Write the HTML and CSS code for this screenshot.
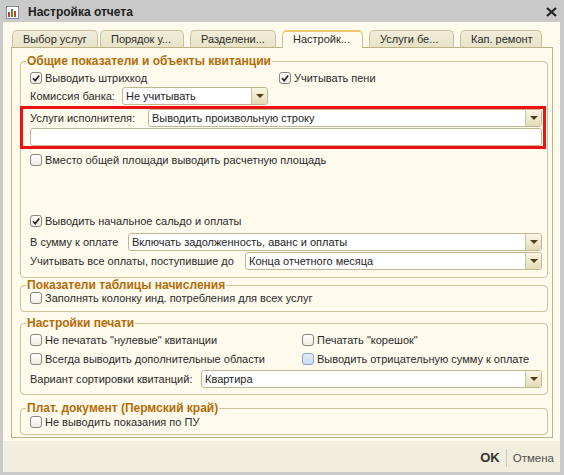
FILE: index.html
```html
<!DOCTYPE html>
<html lang="ru">
<head>
    <meta charset="UTF-8">
    <title>Настройка отчета</title>
    <link rel="stylesheet" href="styles.css">
</head>
<body>
<div class="window">
    <div class="titlebar">
        <svg class="app-icon" width="13" height="13" viewBox="0 0 13 13">
            <rect x="0.5" y="0.5" width="12" height="12" fill="#fff" stroke="#7d8aa0"/>
            <rect x="2" y="6" width="2" height="5" fill="#d8342a"/>
            <rect x="5" y="3" width="2" height="8" fill="#3c9a3c"/>
            <rect x="8" y="5" width="2" height="6" fill="#d8342a"/>
        </svg>
        <span class="title">Настройка отчета</span>
        <svg class="close" width="11" height="10" viewBox="0 0 11 10">
            <path d="M1 1 L10 9 M10 1 L1 9" stroke="#222" stroke-width="2.2"/>
        </svg>
    </div>
    <div class="client">
        <div class="main">
            <div class="tabs">
                <div class="tab">Выбор услуг</div>
                <div class="tab">Порядок у...</div>
                <div class="tab">Разделени...</div>
                <div class="tab active">Настройк...</div>
                <div class="tab">Услуги бе...</div>
                <div class="tab">Кап. ремонт</div>
            </div>
            <div class="panel">
                <fieldset class="group group-main">
                    <legend>Общие показатели и объекты квитанции</legend>
                    <div class="row h19">
                        <label class="check col-a"><span class="cb"><svg viewBox="0 0 10 10"><path d="M2 5.2 L4.2 7.6 L8.2 2.4" stroke="#2a2a2a" stroke-width="1.7" fill="none"/></svg></span>Выводить штрихкод</label>
                        <label class="check"><span class="cb"><svg viewBox="0 0 10 10"><path d="M2 5.2 L4.2 7.6 L8.2 2.4" stroke="#2a2a2a" stroke-width="1.7" fill="none"/></svg></span>Учитывать пени</label>
                    </div>
                    <div class="row field bank">
                        <span class="lbl lbl-bank">Комиссия банка:</span>
                        <div class="select sel-bank"><span class="val">Не учитывать</span><span class="drop"></span></div>
                    </div>
                    <div class="highlight">
                        <div class="row field">
                            <span class="lbl lbl-exec">Услуги исполнителя:</span>
                            <div class="select"><span class="val">Выводить произвольную строку</span><span class="drop"></span></div>
                        </div>
                        <div class="input"></div>
                    </div>
                    <div class="row h22">
                        <label class="check"><span class="cb"></span>Вместо общей площади выводить расчетную площадь</label>
                    </div>
                    <div class="spacer"></div>
                    <div class="row h20">
                        <label class="check"><span class="cb"><svg viewBox="0 0 10 10"><path d="M2 5.2 L4.2 7.6 L8.2 2.4" stroke="#2a2a2a" stroke-width="1.7" fill="none"/></svg></span>Выводить начальное сальдо и оплаты</label>
                    </div>
                    <div class="row field mt2">
                        <span class="lbl lbl-sum">В сумму к оплате</span>
                        <div class="select"><span class="val">Включать задолженность, аванс и оплаты</span><span class="drop"></span></div>
                    </div>
                    <div class="row field mt1">
                        <span class="lbl lbl-pay">Учитывать все оплаты, поступившие до</span>
                        <div class="select"><span class="val">Конца отчетного месяца</span><span class="drop"></span></div>
                    </div>
                </fieldset>

                <fieldset class="group group-table">
                    <legend>Показатели таблицы начисления</legend>
                    <div class="row h12">
                        <label class="check"><span class="cb"></span>Заполнять колонку инд. потребления для всех услуг</label>
                    </div>
                </fieldset>

                <fieldset class="group group-print">
                    <legend>Настройки печати</legend>
                    <div class="row h19">
                        <label class="check col-b"><span class="cb"></span>Не печатать "нулевые" квитанции</label>
                        <label class="check"><span class="cb"></span>Печатать "корешок"</label>
                    </div>
                    <div class="row h20">
                        <label class="check col-b"><span class="cb"></span>Всегда выводить дополнительные области</label>
                        <label class="check"><span class="cb blue"></span>Выводить отрицательную сумму к оплате</label>
                    </div>
                    <div class="row field mt1">
                        <span class="lbl lbl-sort">Вариант сортировки квитанций:</span>
                        <div class="select"><span class="val">Квартира</span><span class="drop"></span></div>
                    </div>
                </fieldset>

                <fieldset class="group group-doc">
                    <legend>Плат. документ (Пермский край)</legend>
                    <div class="row h14">
                        <label class="check"><span class="cb"></span>Не выводить показания по ПУ</label>
                    </div>
                </fieldset>
            </div>
        </div>
        <div class="footer">
            <span class="ok">OK</span>
            <span class="sep"></span>
            <span class="cancel">Отмена</span>
        </div>
    </div>
</div>
</body>
</html>
```

FILE: styles.css
```css
body {
    margin: 0;
    font-family: "Liberation Sans", Arial, sans-serif;
    font-size: 11px;
    color: #2b2b2b;
}
.window {
    width: 564px;
    height: 475px;
    box-sizing: border-box;
    background-color: #c9c9c9;
    padding: 0 4px 3px 3px;
    display: flex;
    flex-direction: column;
}
.titlebar {
    height: 22px;
    display: flex;
    align-items: center;
    padding-top: 2px;
    box-sizing: border-box;
}
.app-icon {
    margin-left: 3px;
}
.title {
    margin-left: 9px;
    font-size: 12px;
    font-weight: bold;
    color: #1e1e1e;
    flex: 1;
}
.close {
    margin-right: 3px;
}
.client {
    flex: 1;
    display: flex;
    flex-direction: column;
    background-color: #fefaec;
}
.main {
    flex: 1;
}
.tabs {
    display: flex;
    margin: 8px 0 0 9px;
    height: 17px;
    position: relative;
    z-index: 1;
}
.tab {
    box-sizing: border-box;
    height: 17px;
    padding: 2px 0 0 10px;
    background: linear-gradient(#f1edda, #e8e2c8);
    border: 1px solid #cbc19c;
    border-bottom: none;
    border-radius: 5px 5px 0 0;
    color: #2b2b2b;
    white-space: nowrap;
}
.tab:nth-child(1) { width: 86px; }
.tab:nth-child(2) { width: 84px; margin-left: 2px; }
.tab:nth-child(3) { width: 86px; margin-left: 6px; }
.tab:nth-child(4) { width: 81px; margin-left: 6px; }
.tab:nth-child(5) { width: 85px; margin-left: 6px; }
.tab:nth-child(6) { width: 82px; margin-left: 6px; }
.tab.active {
    height: 18px;
    background: #fffbee;
    border-color: #cbc19c;
    border-top: 2px solid #f2c66e;
    padding-top: 1px;
}
.panel {
    margin: 0 7px 0 8px;
    border: 1px solid #bdb188;
    padding: 6px 4px 2px 8px;
    background-color: #fefaec;
}
.group {
    margin: 0;
    min-width: 0;
    border: 1px solid #cdc29c;
    border-radius: 4px;
    padding: 0 5px 0 9px;
}
.group legend {
    margin-left: -4px;
    padding: 0 1px;
    line-height: 14px;
    font-size: 12px;
    font-weight: bold;
    color: #b56c08;
}
.group-main {
    padding-bottom: 7px;
}
.group-table {
    padding-bottom: 7px;
}
.group-print {
    margin-top: 4px;
    padding-bottom: 6px;
}
.group-doc {
    margin-top: 6px;
    padding-bottom: 5px;
}
.row {
    display: flex;
    align-items: center;
}
.h12 { height: 12px; }
.h14 { height: 14px; }
.h19 { height: 19px; }
.h20 { height: 20px; }
.h22 { height: 22px; }
.mt1 { margin-top: 1px; }
.mt2 { margin-top: 2px; }
.spacer {
    height: 40px;
}
.check {
    display: flex;
    align-items: center;
    white-space: nowrap;
}
.col-a { width: 249px; }
.col-b { width: 272px; }
.cb {
    width: 10px;
    height: 10px;
    border: 1px solid #8a877a;
    border-radius: 3px;
    background: linear-gradient(#ffffff, #eeebe2);
    margin-right: 3px;
    display: flex;
}
.cb svg {
    width: 10px;
    height: 10px;
}
.cb.blue {
    background: linear-gradient(#e2ecf9, #c9daf2);
    border-color: #8ea6c8;
}
.field {
    height: 18px;
}
.bank {
    margin-bottom: 1px;
}
.lbl {
    white-space: nowrap;
    flex-shrink: 0;
}
.lbl-bank { width: 92px; }
.lbl-exec { width: 118px; }
.lbl-sum { width: 98px; }
.lbl-pay { width: 215px; }
.lbl-sort { width: 171px; }
.select {
    flex: 1;
    height: 18px;
    box-sizing: border-box;
    display: flex;
    border: 1px solid #c1b68f;
    border-radius: 3px;
    background-color: #fff;
    color: #1e1e1e;
}
.sel-bank {
    flex: 0 0 146px;
}
.select .val {
    flex: 1;
    padding-left: 3px;
    line-height: 16px;
    white-space: nowrap;
    overflow: hidden;
}
.drop {
    width: 15px;
    border-left: 1px solid #cfc49d;
    border-radius: 0 2px 2px 0;
    background: linear-gradient(#faf6e6, #e4dbb6);
    display: flex;
    align-items: center;
    justify-content: center;
}
.drop::after {
    content: "";
    border-left: 4px solid transparent;
    border-right: 4px solid transparent;
    border-top: 4px solid #4e3f18;
}
.highlight {
    margin: 0 -4px 0 -10px;
    border: 3px solid #ee1111;
    padding: 0 1px 0 7px;
}
.input {
    margin-top: 1px;
    height: 18px;
    box-sizing: border-box;
    border: 1px solid #c1b68f;
    border-radius: 3px;
    background-color: #fff;
}
.footer {
    height: 31px;
    background-color: #f1eedd;
    display: flex;
    align-items: center;
    justify-content: flex-end;
    padding: 2px 6px 0 0;
    box-sizing: border-box;
}
.ok {
    font-size: 13px;
    font-weight: bold;
    color: #333;
}
.sep {
    width: 1px;
    height: 18px;
    background-color: #d2c9a8;
    margin: 0 6px;
}
.cancel {
    font-size: 11.5px;
    color: #505050;
}
```
